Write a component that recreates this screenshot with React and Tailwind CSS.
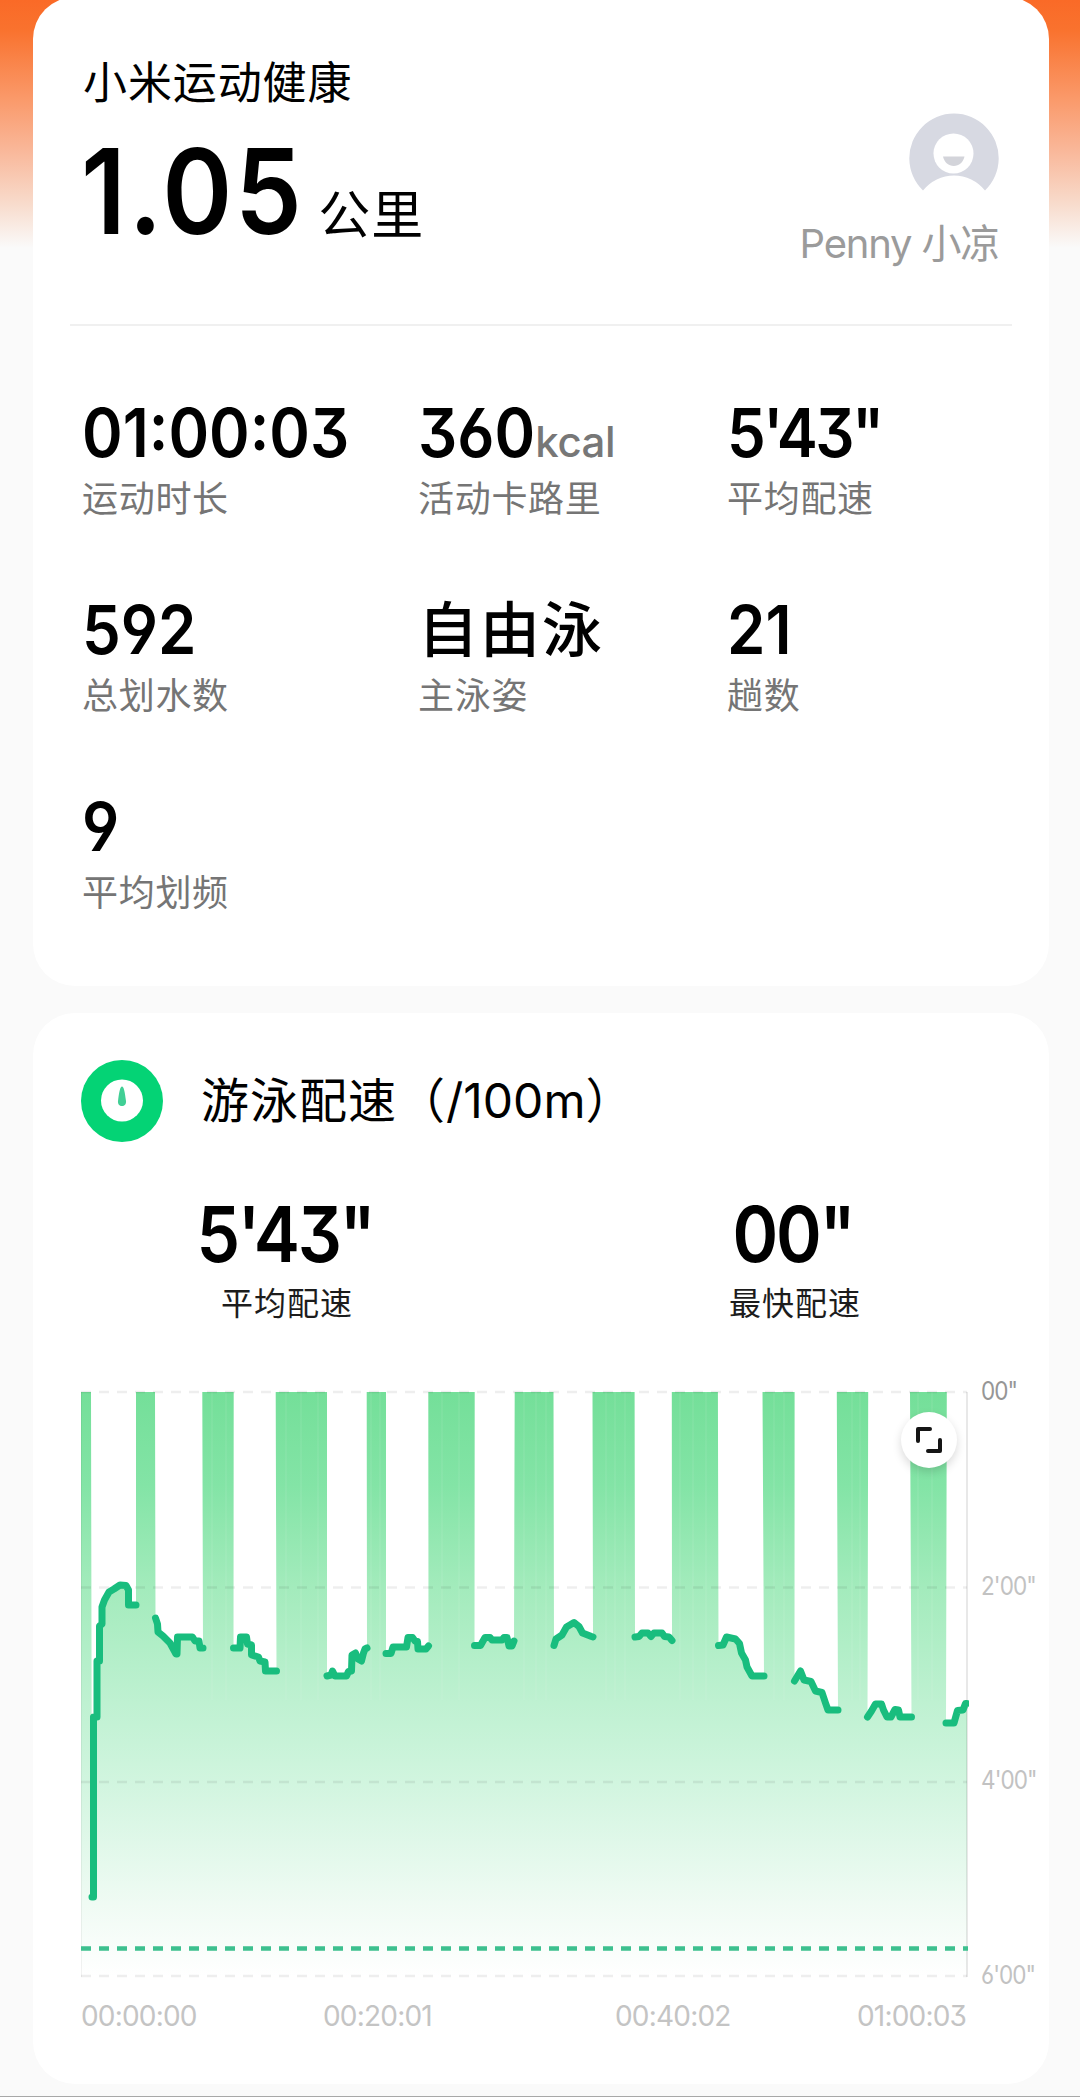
import React from 'react';

const stats = [
  { value: '01:00:03', label: '运动时长' },
  { value: '360', unit: 'kcal', label: '活动卡路里' },
  { value: "5'43\"", label: '平均配速', tight: true },
  { value: '592', label: '总划水数' },
  { value: '自由泳', label: '主泳姿', cjk: true },
  { value: '21', label: '趟数' },
  { value: '9', label: '平均划频' },
];

// Rest periods: [start, end], drawn as full height bars
const rests = [
  [81, 91], [136, 155], [202.3, 233.7], [275.7, 327], [366.7, 386], [428.3, 474.7],
  [514.7, 553.5], [592.5, 634.6], [671.8, 717.9], [762.5, 794.6], [836.8, 868.2], [910, 946.8],
];

// Swim periods: the pace line between two rests
const swims = [
  '92,1897 93.5,1897 93.5,1717 97,1717 97,1661 99.5,1661 99.5,1626 102,1624 102,1607 104.5,1600 109,1592 114,1589 120,1585 126,1585.5 128.5,1590 128.5,1605 136,1605',
  '155.5,1618 157.5,1624 158,1632 163,1636 170,1643 176,1654 177,1654 177.5,1637 192.5,1637 195,1641 199,1641 200,1648 203,1648',
  '233.5,1648 240,1648 240.5,1637 246.5,1637 247.5,1644 251.5,1645 251.5,1655 258.5,1657 260,1661 265,1662 265.5,1671 276.5,1671',
  '327,1676 331,1675 332.5,1671 335,1676 346.5,1676 348.5,1671.5 351.5,1671 352,1655 355.5,1653 358,1659 361.5,1661 363.5,1653 365,1649 367,1648',
  '386,1653.5 391,1653.5 393,1647 406.5,1647 408,1637.5 412.5,1637.5 415,1641 417.5,1641.5 418,1649 426,1649 428.5,1646',
  '474.5,1645.5 480.5,1645.5 485,1637.5 490,1637.5 492,1640 502,1640 504,1637.5 507,1637.5 509,1646 512,1646 514,1641',
  '554,1645.5 556,1639 562,1635 566.5,1627 574,1622.5 579,1626.5 582.5,1633 591.5,1636.5 593,1637',
  '635,1637 639,1636.5 642,1633 648,1633 651,1636.5 654,1633 662,1633 664.5,1636.5 669,1637 672,1640.5',
  '718.5,1645.5 723,1645 726.5,1637 735.5,1639 739.5,1643.5 741.5,1653 745.5,1660 747,1667 752,1676 764,1676',
  '794.5,1681 800.5,1671 804,1680 811,1681.5 815.5,1691 822,1692.5 825.5,1703 828,1710 838,1710',
  '867.5,1717 871.5,1711 875.5,1704 881.5,1704 883.5,1710 887,1717 891,1717 895,1709.5 898.5,1710 900,1717 911.5,1717',
  '946,1723 954,1723 957.5,1710.5 963,1710 965.5,1703.5 967,1703.5',
];

const seams = [212, 226, 286, 301, 318, 371, 380, 442, 459, 524, 536, 546, 606, 615, 625, 680, 693, 706, 774, 784, 852, 860, 918, 932];

const gridLines = [1392, 1587.5, 1782, 1976];

const Avatar = () => (
  <svg className="w-[90px] h-[90px]" viewBox="0 0 90 90">
    {/* Ring stops where the shoulders begin */}
    <path d="M14 77.500A44.700 44.700 0 1 1 76 77.500A39.500 39.500 0 0 0 14 77.500z" fill="#d7d9e2" />
    <circle cx="44.500" cy="40.500" r="20" fill="#fff" />
    <path d="M34 43.500h21.500c-1.500 6-5.500 9.500-10.750 9.500S35.500 49.500 34 43.500z" fill="#d3d4da" />
  </svg>
);

const PaceIcon = () => (
  <svg className="w-[82px] h-[82px]" viewBox="0 0 82 82">
    <circle cx="41" cy="41" r="41" fill="#04d375" />
    <circle cx="41" cy="40.500" r="21" fill="#fff" />
    <path d="M41 26.500c1.800 0 2.800 5 4 14.500.4 3-1.500 5-4 5s-4.400-2-4-5c1.200-9.500 2.200-14.500 4-14.500z" fill="#41cf95" />
  </svg>
);

const Stat = ({ value, unit, label, cjk, tight }) => (
  <div>
    <div className="h-[60px] leading-[60px] whitespace-nowrap">
      {cjk ? (
        <span className="text-[60px] font-medium tracking-[2px]">{value}</span>
      ) : (
        <span
          className={`inline-block origin-left scale-x-92 text-[67px] font-semibold ${tight ? 'tracking-[-2.800px]' : 'tracking-[0px]'}`}
        >
          {value}
        </span>
      )}
      {unit && <span className="ml-[-10px] text-[42px] font-medium text-[#777] tracking-[-0.500px]">{unit}</span>}
    </div>
    <p className="mt-[16px] text-[36px] leading-[40px] tracking-[0.700px] text-[#757575]">{label}</p>
  </div>
);

const PaceValue = ({ value, label }) => (
  <div className="flex-1 text-center">
    <p className="mr-[4px] scale-x-90 text-[77px] leading-[64px] font-semibold tracking-[-2.500px]">{value}</p>
    <p className="mt-[20px] text-[32px] leading-[36px] tracking-[1px] text-[#1c1c1c]">{label}</p>
  </div>
);

const PaceChart = () => {
  // Area outline follows the swims and jumps to the top for every rest
  const area = rests
    .map(([start, end], i) => `L${start},1392 L${end},1392 L${swims[i].split(' ').join(' L')}`)
    .join(' ');

  return (
    <svg className="w-[888px] h-[600px] shrink-0" viewBox="81 1380 888 600">
      <defs>
        <linearGradient id="pace" gradientUnits="userSpaceOnUse" x1="0" y1="1392" x2="0" y2="1976">
          <stop offset="0" stopColor="#74df99" />
          <stop offset="0.160" stopColor="#83e4a6" />
          <stop offset="0.335" stopColor="#a3ebbc" />
          <stop offset="0.500" stopColor="#baf0ce" />
          <stop offset="0.668" stopColor="#d1f5df" />
          <stop offset="0.880" stopColor="#f0fbf4" />
          <stop offset="1" stopColor="#ffffff" />
        </linearGradient>
      </defs>

      <path d={`M81,1976 ${area} L967,1976 Z`} fill="url(#pace)" />
      {seams.map((x) => (
        <line key={x} x1={x} x2={x} y1="1392" y2="1700" stroke="#fff" strokeOpacity="0.120" strokeWidth="1" />
      ))}

      {gridLines.map((y) => (
        <line key={y} x1="81" x2="967" y1={y} y2={y} stroke="#000" strokeOpacity="0.065" strokeWidth="2.500" strokeDasharray="10 8" />
      ))}
      <line x1="81.500" x2="81.500" y1="1392" y2="1977" stroke="#000" strokeOpacity="0.050" />
      <line x1="967" x2="967" y1="1392" y2="1977" stroke="#000" strokeOpacity="0.090" strokeWidth="2" />

      {/* Average pace */}
      <line x1="81" x2="968" y1="1948.500" y2="1948.500" stroke="#3dc08f" strokeWidth="4.500" strokeDasharray="10 8" />

      {swims.map((points) => (
        <polyline key={points} points={points} fill="none" stroke="#19bd7e" strokeWidth="7" strokeLinejoin="round" strokeLinecap="round" />
      ))}
    </svg>
  );
};

const App = () => {
  return (
    <div className="h-[2097px] w-[1080px] overflow-hidden border-b border-[#a8a8a8] bg-[#fafafa] bg-[linear-gradient(180deg,#fa6a27_0px,#f9722e_30px,#fa9a6b_100px,#f9b799_150px,#f8dccd_205px,#fafafa_248px)] pl-[33px] pr-[31px] font-['Inter','Noto_Sans_CJK_SC',sans-serif] text-black [font-feature-settings:'cv03','cv04','cv09']">
      {/* Summary */}
      <div className="-mt-[3px] h-[989px] rounded-[42px] bg-white pt-[3px]">
        <div className="mx-[37px] flex h-[326px] justify-between border-b-2 border-[#f0f0f0] pl-[13px] pr-[13px]">
          <div className="pt-[61px]">
            <h1 className="text-[44px] leading-[44px] tracking-[0.900px]">小米运动健康</h1>
            <div className="-ml-[2px] mt-[42px] leading-[88px] whitespace-nowrap">
              <span className="inline-block origin-left scale-x-90 text-[118px] font-semibold tracking-[3px]">1.05</span>
              <span className="ml-[-11px] text-[52px] tracking-[1px]">公里</span>
            </div>
          </div>
          <div className="flex flex-col items-end pt-[113px]">
            <Avatar />
            <p className="mt-[19px] text-[40px] leading-[44px] tracking-[-1.200px] text-[#9b9b9b]">Penny 小凉</p>
          </div>
        </div>

        <div className="ml-[49px] mt-[77px] grid grid-cols-[336px_309px_1fr] gap-y-[81px]">
          {stats.map((stat) => (
            <Stat key={stat.label} {...stat} />
          ))}
        </div>
      </div>

      {/* Pace */}
      <div className="mt-[27px] h-[1071px] rounded-[42px] bg-white pt-[47px]">
        <div className="ml-[48px] flex items-center">
          <PaceIcon />
          <h2 className="ml-[38px] text-[48px] leading-[56px] tracking-[1px] whitespace-nowrap">
            游泳配速（<span className="tracking-[0px]">/100m</span>）
          </h2>
        </div>

        <div className="mt-[60px] flex">
          <PaceValue value={"5'43\""} label="平均配速" />
          <PaceValue value={'00"'} label="最快配速" />
        </div>

        <div className="relative ml-[48px] mt-[58px] flex">
          <PaceChart />
          <div className="-mt-px ml-[12px] flex h-[608px] origin-left scale-x-90 flex-col justify-between text-[25px] leading-[24px] tracking-[-1px] text-[#c2c2c2]">
            <span className="text-[#969696]">00"</span>
            <span>2'00"</span>
            <span>4'00"</span>
            <span>6'00"</span>
          </div>
          <button className="absolute left-[820px] top-[32px] flex h-[56px] w-[56px] items-center justify-center rounded-full bg-white shadow-[0_4px_10px_rgba(0,0,0,0.15)]">
            <svg className="h-[30px] w-[30px]" viewBox="0 0 30 30" fill="none" stroke="#151515" strokeWidth="4" strokeLinecap="round" strokeLinejoin="round">
              <path d="M16 4H4v12" />
              <path d="M26 15v11H14" />
            </svg>
          </button>
        </div>

        <div className="ml-[48px] mt-[14px] flex text-[28px] leading-[30px] tracking-[-0.800px] text-[#c4c4c4]">
          <span className="w-[242px]">00:00:00</span>
          <span className="w-[292px]">00:20:01</span>
          <span className="w-[242px]">00:40:02</span>
          <span>01:00:03</span>
        </div>
      </div>
    </div>
  );
};

export default App;
